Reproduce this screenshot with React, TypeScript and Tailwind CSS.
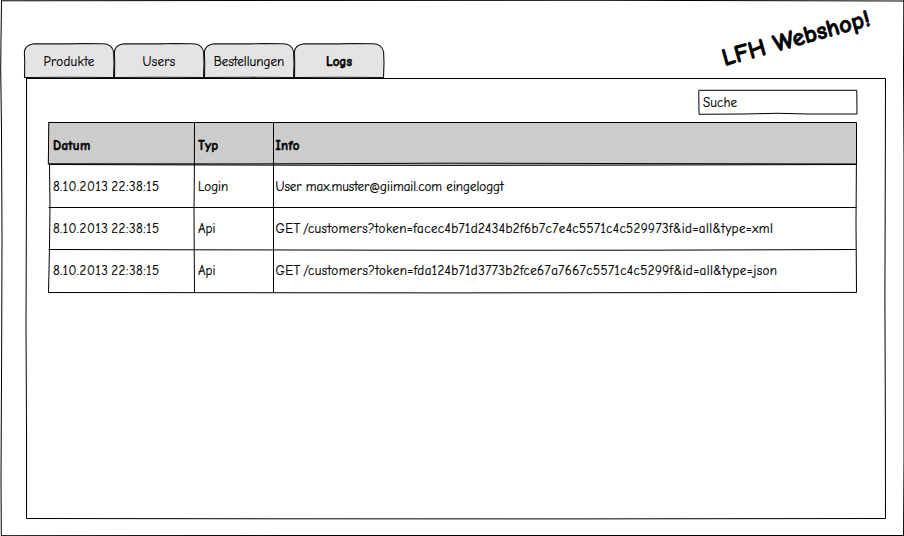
const font = "font-['Comic_Sans_MS','Comic_Neue','Noto_Sans',sans-serif]";

function Sketch({ w, h, lines }: { w: number; h: number; lines: string[] }) {
  return (
    <svg className="pointer-events-none absolute left-0 top-0 overflow-visible" width={w} height={h} fill="none" stroke="#000" strokeWidth="1">
      {lines.map((d) => (
        <path key={d} d={d} />
      ))}
    </svg>
  );
}

const tabs = [
  { label: "Produkte", cls: "tracking-[0.3px]" },
  { label: "Users", cls: "tracking-[0.3px]" },
  { label: "Bestellungen", cls: "tracking-[0.05px]" },
  { label: "Logs", cls: "font-bold [-webkit-text-stroke:0.5px_black]" },
];

function Tab({ label, cls }: { label: string; cls: string }) {
  return (
    <div className="relative flex h-[35px] w-[90px] items-center justify-center">
      <svg className="absolute left-0 top-0 overflow-visible" width="90" height="35" fill="#e4e4e4" stroke="#111" strokeWidth="1.1">
        <path d="M.5 34.5 L.7 20 L.4 9 Q1 2 10 .8 L45 .9 L60 .5 L79 .8 Q88 1 89.6 9 L90 20 L89.5 34.5 L45 34.3 Z" />
      </svg>
      <span className={"relative top-[1px] whitespace-nowrap " + cls}>{label}</span>
    </div>
  );
}

const rows = [
  { date: "8.10.2013 22:38:15", type: "Login", info: "User max.muster@giimail.com eingeloggt", cls: "tracking-[0px]", h: "h-[43px]" },
  { date: "8.10.2013 22:38:15", type: "Api", info: "GET /customers?token=facec4b71d2434b2f6b7c7e4c5571c4c529973f&id=all&type=xml", cls: "tracking-[0.41px] [word-spacing:-2.3px]", h: "h-[42px]" },
  { date: "8.10.2013 22:38:15", type: "Api", info: "GET /customers?token=fda124b71d3773b2fce67a7667c5571c4c5299f&id=all&type=json", cls: "tracking-[0.43px] [word-spacing:-2.3px]", h: "h-[42px]" },
];

export default function App() {
  return (
    <div className={"relative h-[536px] w-[904px] overflow-hidden bg-white text-[13px] leading-4 text-black [-webkit-text-stroke:0.2px_black] " + font}>
      <Sketch w={904} h={536} lines={["M1.5 .5 L1 40 L.7 70 L1.5 130 L2 240 L1.6 360 L1 480 L1.3 535.5", "M1 .8 L250 .5 L600 .3 L904 1", "M903.8 0 L903.5 70 L904 160 L904 460 L903.5 536", "M1 535.7 L300 535.5 L904 535.5"]} />
      <header className="flex h-[78px] items-start justify-between pl-6 pr-[31px]">
        <nav className="flex pt-[43px]">
          {tabs.map((t) => (
            <Tab key={t.label} {...t} />
          ))}
        </nav>
        <h1 className="mt-[22px] w-[154px] origin-center -rotate-[15.5deg] whitespace-nowrap text-center text-[24.5px] font-bold leading-8 [-webkit-text-stroke:0.7px_black]">LFH Webshop!</h1>
      </header>
      <main className="relative ml-[26px] h-[441px] w-[860px] pl-[22px] pt-3">
        <Sketch w={860} h={441} lines={["M0 .5 H859.5", "M.5 .5 L.5 100 L0 250 L.5 350 L.5 440.5", "M859.5 .5 L859.3 90 L858.9 220 L859.4 350 L859.5 440.5", "M.5 440.5 L250 440.8 L550 440.9 L859.5 440.5"]} />
        <div className="relative ml-[650px] flex h-6 w-[159px] items-center pl-[5px]">
          <Sketch w={159} h={24} lines={["M.8 .3 L158.8 .3 L159 24 L110 24 L80 23.3 L45 24 L1 24.3 Z"]} />
          <span className="pt-px tracking-[0.1px]">Suche</span>
        </div>
        <section className="relative mt-[8px] w-[809px]">
          <div className="grid h-[43px] grid-cols-[145px_77.5px_1fr] items-center bg-[#ccc] pl-[5px] font-bold tracking-[0.3px] [-webkit-text-stroke:0.5px_black]">
            <span className="pt-[4px]">Datum</span>
            <span className="pt-[4px]">Typ</span>
            <span className="pt-[4px]">Info</span>
          </div>
          {rows.map((r) => (
            <div key={r.info} className={"grid grid-cols-[145px_77.5px_1fr] items-center pl-[5px] " + r.h}>
              <span className="whitespace-nowrap tracking-[0.57px] [word-spacing:-2px]">{r.date}</span>
              <span>{r.type}</span>
              <span className={"whitespace-nowrap " + r.cls}>{r.info}</span>
            </div>
          ))}
          <Sketch
            w={809}
            h={171}
            lines={[
              "M.5 .5 H808.5 V42.5",
              "M.8 .5 L.3 42.5",
              "M.5 41.8 L200 41.9 L400 41.2 L600 41.6 L808.5 42",
              "M1 42.5 L240 43.2 L400 43.4 L550 43.2 L808.5 42.5",
              "M1.5 43 L2 85 L1.5 125 L.5 170.5",
              "M808.4 43 L808 100 L808.5 170.5",
              "M.5 85.5 H808.5",
              "M.5 127.5 L150 127.8 L400 128.3 L600 128.2 L808.5 127.5",
              "M.5 170.5 L400 170.9 L808.5 170.4",
              "M146.5 .5 L146.4 45 L146 90 L146.5 170.5",
              "M225.5 .5 V170.5",
            ]}
          />
        </section>
      </main>
    </div>
  );
}
